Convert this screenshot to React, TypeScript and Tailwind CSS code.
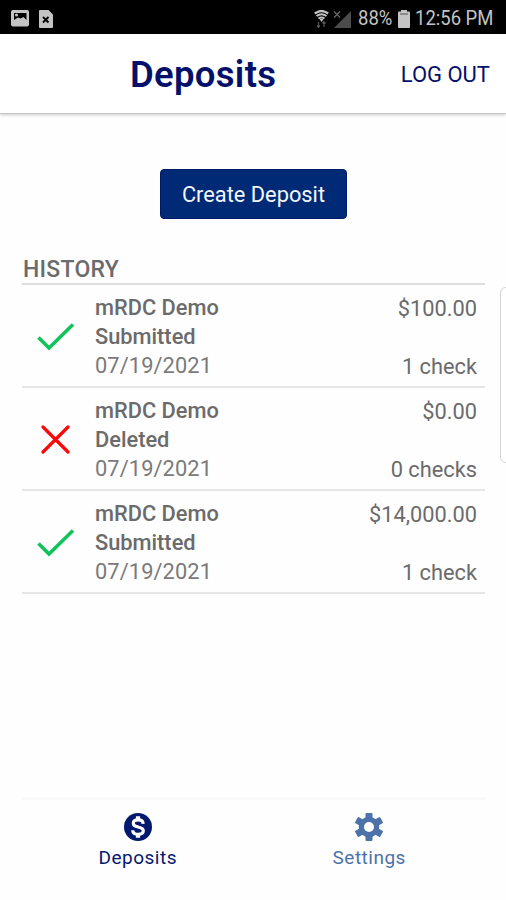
import React from 'react';

type Deposit = {
    id: number;
    account: string;
    status: 'Submitted' | 'Deleted';
    date: string;
    amount: string;
    checks: string;
};

const deposits: Deposit[] = [
    { id: 1, account: 'mRDC Demo', status: 'Submitted', date: '07/19/2021', amount: '$100.00', checks: '1 check' },
    { id: 2, account: 'mRDC Demo', status: 'Deleted', date: '07/19/2021', amount: '$0.00', checks: '0 checks' },
    { id: 3, account: 'mRDC Demo', status: 'Submitted', date: '07/19/2021', amount: '$14,000.00', checks: '1 check' },
];

const StatusBar = () => (
    <div className="h-[34px] shrink-0 bg-black flex items-center justify-between pl-[11px] pr-[12px] pt-[3px] text-[#c4c4c4]">
        <div className="flex items-center gap-[10px]">
            {/* Picture */}
            <svg className="w-[18px] h-[17px]" viewBox="0 0 18 17">
                <rect x="0" y="0" width="18" height="16.500" rx="2" fill="#c4c4c4" />
                <path d="M3 3h12.500v7l-3-3-3 1.500L7 7.500 3 10z" fill="#000" />
                <circle cx="5.500" cy="5" r="1.500" fill="#c4c4c4" />
            </svg>
            {/* File with a cross */}
            <svg className="w-[14px] h-[18px]" viewBox="0 0 14 18">
                <path d="M1 0h8.500L14 4.500V17a1 1 0 0 1-1 1H1a1 1 0 0 1-1-1V1a1 1 0 0 1 1-1z" fill="#c4c4c4" />
                <path d="M4 7l5.500 5.500M9.500 7L4 12.500" stroke="#000" strokeWidth="1.800" />
            </svg>
        </div>
        <div className="flex items-center">
            {/* Wifi */}
            <svg className="w-[15px] h-[18px]" viewBox="0 0 15 18" fill="none" stroke="#c4c4c4">
                <path d="M0.800 3.500Q7.500-1.500 14.200 3.500" strokeWidth="2.200" />
                <path d="M2.500 6Q7.500 2.500 12.500 6" strokeWidth="2" />
                <path d="M4.500 8.500Q7.500 6.500 10.500 8.500" strokeWidth="1.900" />
                <path d="M5.500 9h4l-2 3z" fill="#c4c4c4" stroke="none" />
                <path d="M4.500 12v5M3 15.500l1.500 1.800L6 15.500M10 17v-5M8.500 13.500L10 11.700l1.500 1.800" stroke="#555" strokeWidth="1.300" />
            </svg>
            {/* No signal */}
            <svg className="ml-[4px] w-[19px] h-[18px]" viewBox="0 0 19 18">
                <path d="M18 1v17H1z" fill="#4c4c4c" />
                <path d="M1 1.500l6 6M7 1.500l-6 6" stroke="#666" strokeWidth="1.400" />
            </svg>
            <span className="ml-[6px] w-[35px] text-[21px] leading-none whitespace-nowrap"><span className="inline-block origin-left scale-x-[0.88]">88%</span></span>
            <svg className="ml-[5px] w-[12px] h-[18px]" viewBox="0 0 12 18">
                <path d="M3 0h6v1.500h2a1 1 0 0 1 1 1V17a1 1 0 0 1-1 1H1a1 1 0 0 1-1-1V2.500a1 1 0 0 1 1-1h2z" fill="#c4c4c4" />
                <path d="M2 4h8" stroke="#555" strokeWidth="1" />
            </svg>
            <span className="ml-[5px] w-[79px] text-[21px] leading-none whitespace-nowrap"><span className="inline-block origin-left scale-x-[0.88]">12:56 PM</span></span>
        </div>
    </div>
);

const StatusIcon = ({ status }: { status: Deposit['status'] }) =>
    status === 'Submitted' ? (
        <svg className="w-[38px] h-[30px]" viewBox="0 0 38 30" fill="none">
            <path d="M2.500 15.500L13 26 37 2.500" stroke="#10c45c" strokeWidth="3.600" />
        </svg>
    ) : (
        <svg className="w-[38px] h-[30px]" viewBox="0 0 38 30" fill="none">
            <path d="M7 2l25 25M32 2L7 27" stroke="#f80808" strokeWidth="3.200" strokeLinecap="round" />
        </svg>
    );

const PaidIcon = () => (
    <svg className="w-[28px] h-[28px]" viewBox="0 0 28 28" fill="none">
        <circle cx="14" cy="14" r="14" fill="#04186e" />
        <path d="M14 3.200v4M14 20.800v4" stroke="#fff" strokeWidth="4.200" />
        <path d="M19.200 10.800C19 8.300 17 6.900 14.200 6.900c-2.900 0-4.900 1.400-4.900 3.500 0 5 10 2.200 10 7.400 0 2.200-2.100 3.500-5.100 3.500-3.300 0-5.400-1.500-5.500-4.100" stroke="#fff" strokeWidth="3.200" />
    </svg>
);

const GearIcon = () => (
    <svg className="w-[28px] h-[28px]" viewBox="0 0 28 28">
        <g fill="#4d72aa">
            <rect x="10.500" y="0" width="7" height="28" rx="1" />
            <rect x="10.500" y="-0.500" width="7" height="29" rx="1" transform="rotate(60 14 14)" />
            <rect x="10.500" y="-0.500" width="7" height="29" rx="1" transform="rotate(120 14 14)" />
            <circle cx="14" cy="14" r="10.300" />
        </g>
        <circle cx="14" cy="14" r="5" fill="#fefefe" />
    </svg>
);

const DepositRow = ({ deposit }: { deposit: Deposit }) => (
    <div className="h-[103px] border-b-2 border-[#e6e6e6] flex items-center pl-[14px] pr-2 pt-[2px] text-[21.800px] leading-[29.300px] text-[#6b6b6b]">
        <StatusIcon status={deposit.status} />
        <div className="ml-[21px] flex-1">
            <div className="font-medium">{deposit.account}</div>
            <div className="font-medium">{deposit.status}</div>
            <div className="tracking-[0.100px] text-[#7a7a7a]">{deposit.date}</div>
        </div>
        <div className="self-stretch flex flex-col justify-between pt-[7px] pb-[5px] text-right">
            <div>{deposit.amount}</div>
            <div>{deposit.checks}</div>
        </div>
    </div>
);

const App = () => {
    return (
        <div className="relative w-[506px] h-[900px] overflow-hidden bg-[#fefefe] flex flex-col font-['Roboto',sans-serif]">
            <StatusBar />

            {/* Header */}
            <header className="h-[80px] shrink-0 bg-white grid grid-cols-[130px_1fr_auto] items-center pr-[16px] pt-[3px] text-[#04106a] border-b border-[#c4c6c6] shadow-[0_1px_3px_rgba(0,0,0,0.2)]">
                <h1 className="col-start-2 pt-[1px] text-[36.500px] font-semibold leading-none tracking-[0.300px]">Deposits</h1>
                <button className="text-[22px] leading-none">LOG OUT</button>
            </header>

            <main className="flex-1 flex flex-col pl-[22px] pr-[21px]">
                <button className="mt-[55px] ml-[138px] w-[187px] h-[50px] rounded-[4px] bg-[#002a75] border border-[#001b66] pt-[2px] text-[21.800px] text-[#f4f6fc]">
                    Create Deposit
                </button>
                <h2 className="mt-[34px] h-[32px] pl-[1px] border-b-2 border-[#dedede] text-[23px] leading-[34px] tracking-[0.250px] font-medium text-[#6b6b6b]">HISTORY</h2>
                {deposits.map((deposit) => (
                    <DepositRow key={deposit.id} deposit={deposit} />
                ))}
            </main>

            {/* Bottom tabs */}
            <nav className="h-[103px] shrink-0 ml-[22px] mr-[21px] border-t-[3px] border-[#f9f9f9] grid grid-cols-2 text-[19px] leading-none tracking-[0.500px]">
                <div className="flex flex-col items-center pt-[13px] gap-[7px] text-[#04186e]">
                    <PaidIcon />
                    <span>Deposits</span>
                </div>
                <div className="flex flex-col items-center pt-[13px] gap-[7px] text-[#4d72aa]">
                    <GearIcon />
                    <span>Settings</span>
                </div>
            </nav>

            {/* Edge panel handle */}
            <div className="absolute left-[500px] top-[287px] w-[12px] h-[176px] rounded-[6px] border border-[#d4d4d4] bg-white" />
        </div>
    );
};

export default App;
